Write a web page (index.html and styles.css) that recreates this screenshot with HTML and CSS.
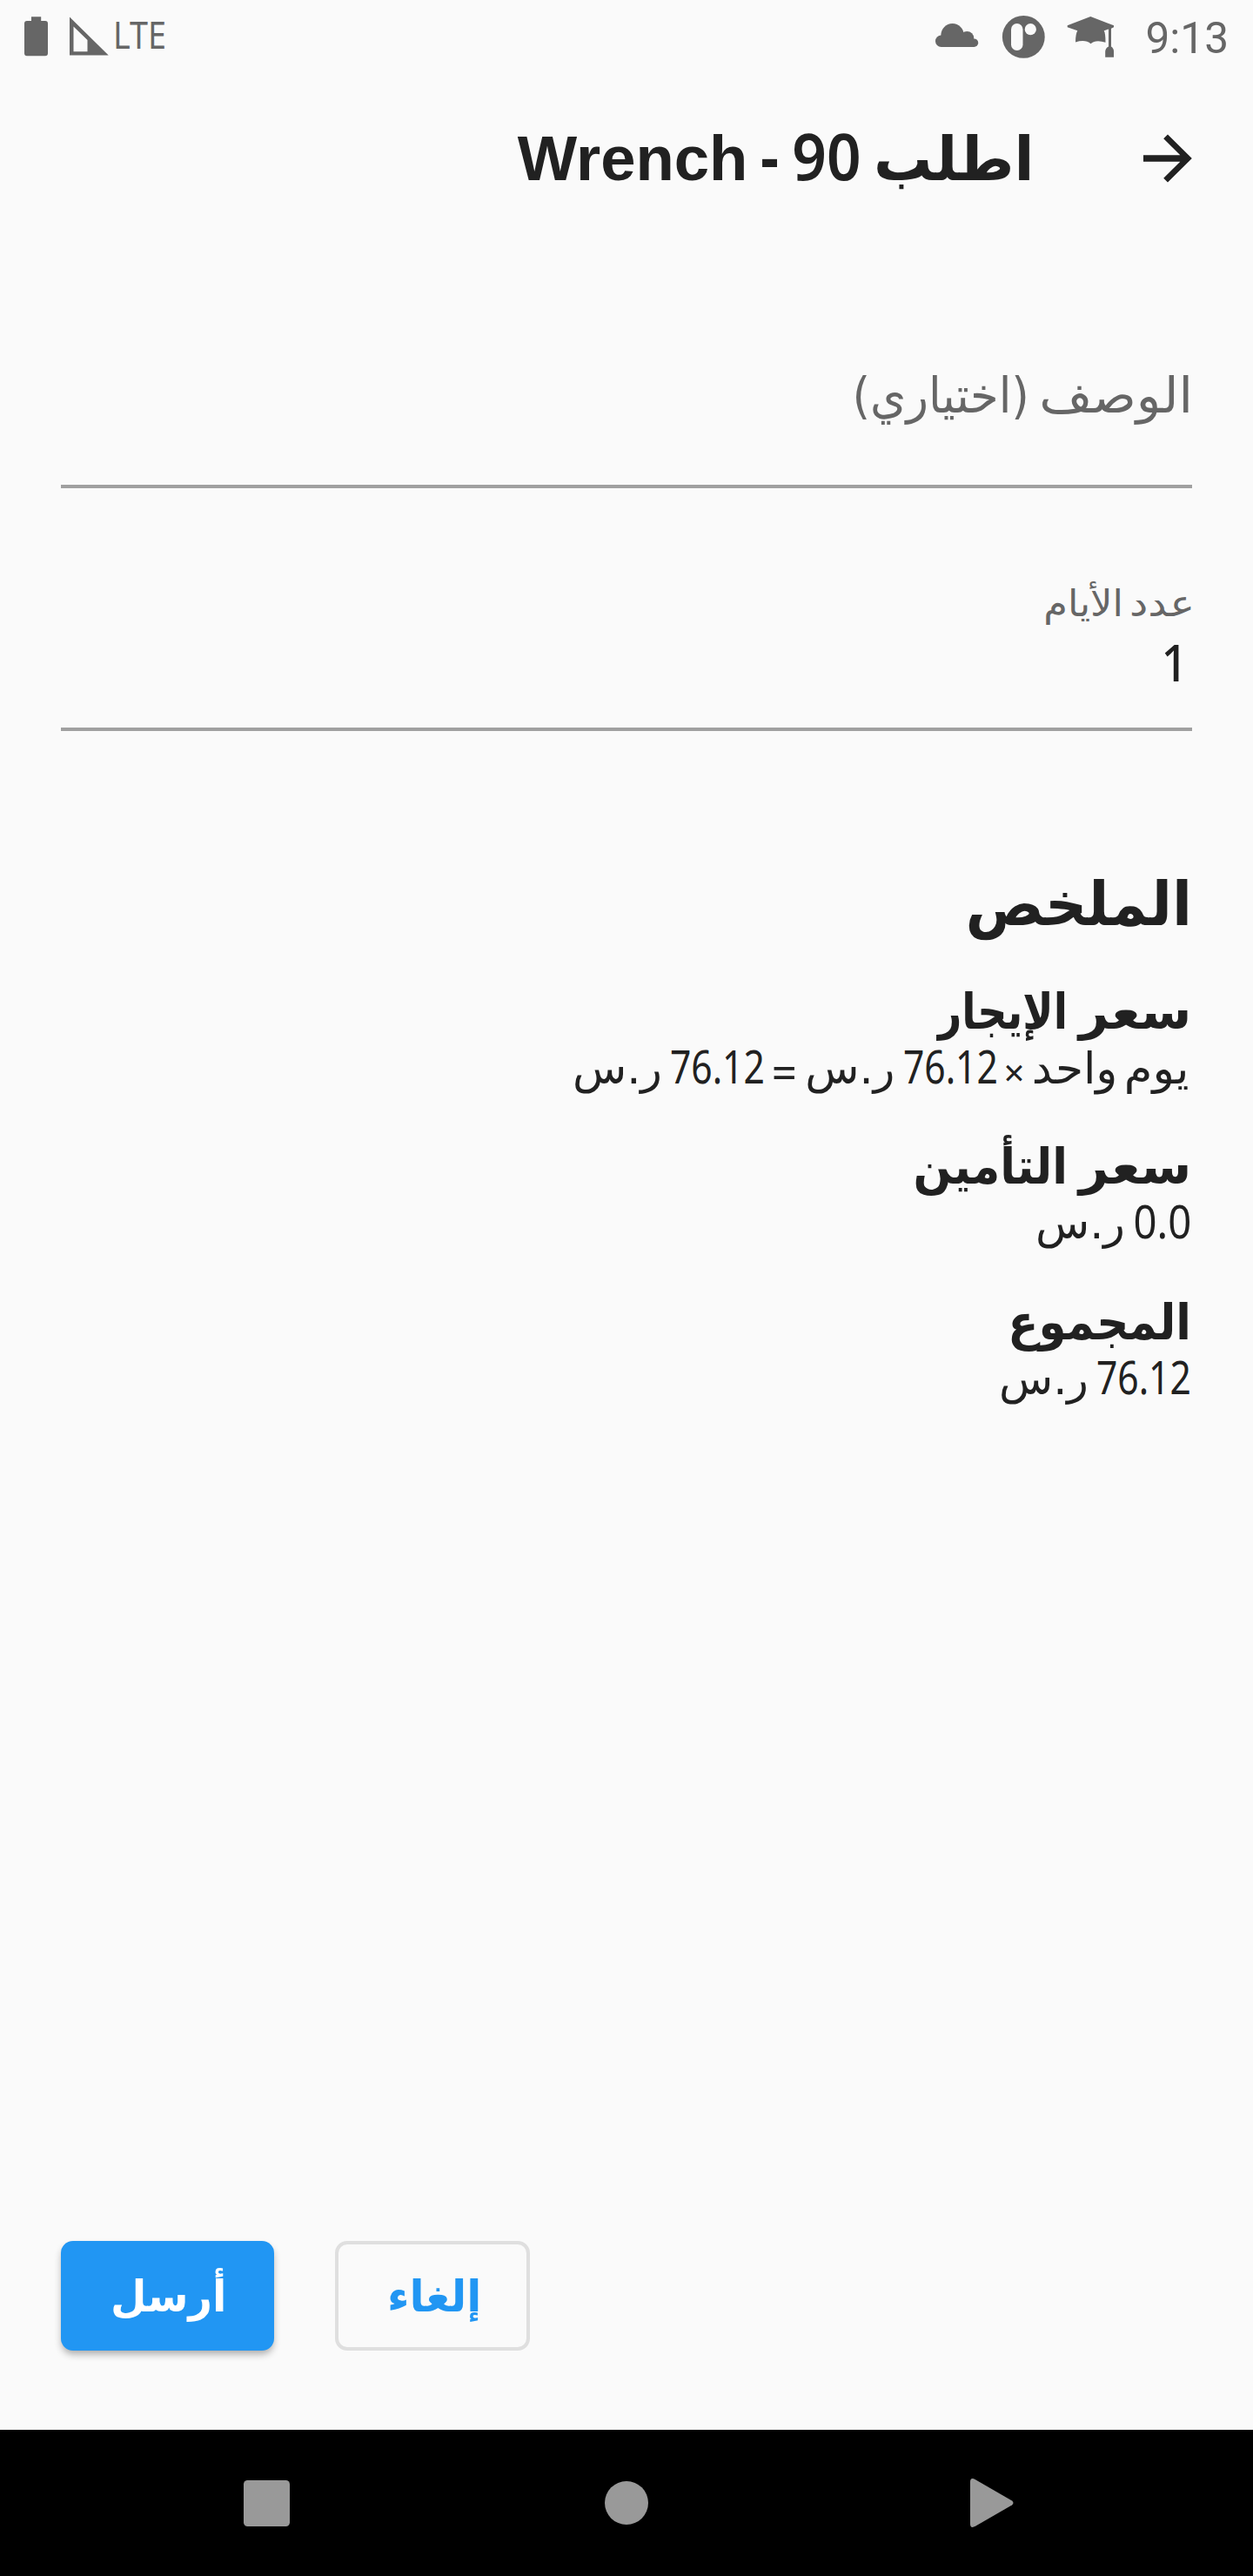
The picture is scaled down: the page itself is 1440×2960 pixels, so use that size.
FILE: index.html
```html
<!DOCTYPE html>
<html lang="ar" dir="rtl">
<head>
<meta charset="utf-8">
<title>اطلب 90 - Wrench</title>
<link rel="stylesheet" href="styles.css">
</head>
<body>
<div class="screen">
  <div class="status" dir="ltr">
    <svg class="status-left" width="100" height="84" viewBox="28 0 100 84">
      <path d="M36 19.3h11.2V24H52a3 3 0 0 1 3 3v34.3a3 3 0 0 1-3 3H31a3 3 0 0 1-3-3V27a3 3 0 0 1 3-3h5z"/>
      <path fill-rule="evenodd" d="M80 19.5 124.7 63.5H80zM84.5 30.5V59.3h16V46z"/>
    </svg>
    <span class="lte">LTE</span>
    <svg class="status-right" width="210" height="84" viewBox="1072 0 210 84">
      <circle cx="1080.7" cy="47.3" r="6.7"/>
      <circle cx="1093.6" cy="40.3" r="13.2"/>
      <circle cx="1110.3" cy="44" r="8"/>
      <circle cx="1118.4" cy="49.2" r="4.8"/>
      <path d="M1080.7 42h29.600l8.100 4v8h-37.700z"/>
      <circle cx="1175.3" cy="42.4" r="24.4"/>
      <rect class="cut" x="1161" y="27" width="13.5" height="31" rx="6.7"/>
      <circle class="cut" cx="1183.3" cy="33.7" r="6.6"/>
      <path d="M1225.700 29.300 1252.300 19 1279 29.300V31.300L1276 32.800V53.500Q1279 55.500 1279 59V65.700H1269.200V59Q1269.200 55.500 1273 53.500V33.500L1267.700 35.300Q1269.500 38 1269.500 48.700 1258 45 1252.500 50.300 1246.500 45 1235 48.500 1235 39 1237.300 35.300L1225.700 31.200z"/>
    </svg>
    <span class="clock">9:13</span>
  </div>

  <header class="header">
    <svg class="arrow" width="56" height="56" viewBox="0 0 56 56"><path d="M0 24.300H42.300L23.200 5.200 28 .4 55.800 28 28 55.600 23.200 50.800 42.300 31.700H0z"/></svg>
    <h1 class="row title">
      <span class="w t-order">اطلب</span>
      <span class="w t-num">90</span>
      <span class="w t-dash">-</span>
      <span class="w t-name">Wrench</span>
    </h1>
  </header>

  <main class="main">
    <div class="field field-desc">
      <div class="row label-big"><span class="w l-desc">الوصف</span><span class="w l-opt">(اختياري)</span></div>
    </div>
    <div class="field field-days">
      <div class="row label-small"><span class="w l-count">عدد</span><span class="w l-days">الأيام</span></div>
      <div class="row value"><span class="w v-one">1</span></div>
    </div>

    <h2 class="row summary"><span class="w s-head">الملخص</span></h2>
    <div class="prices">
      <section>
        <h3 class="row"><span class="w h-price">سعر</span><span class="w h-rent">الإيجار</span></h3>
        <p class="row">
          <span class="w p-day">يوم</span>
          <span class="w p-one">واحد</span>
          <span class="w p-times">×</span>
          <span class="w p-amount p-first">76.12</span>
          <span class="w p-cur p-cur-first">ر.س</span>
          <span class="w p-equal">=</span>
          <span class="w p-amount">76.12</span>
          <span class="w p-cur">ر.س</span>
        </p>
      </section>
      <section>
        <h3 class="row"><span class="w h-price">سعر</span><span class="w h-insurance">التأمين</span></h3>
        <p class="row"><span class="w p-zero">0.0</span><span class="w p-cur">ر.س</span></p>
      </section>
      <section>
        <h3 class="row"><span class="w h-total">المجموع</span></h3>
        <p class="row"><span class="w p-amount">76.12</span><span class="w p-cur">ر.س</span></p>
      </section>
    </div>
  </main>

  <footer class="actions" dir="ltr">
    <button class="btn send" dir="rtl"><span class="w">أرسل</span></button>
    <button class="btn cancel" dir="rtl"><span class="w">إلغاء</span></button>
  </footer>

  <nav class="nav" dir="ltr">
    <svg width="53" height="53" viewBox="0 0 53 53"><rect width="53" height="53" rx="4.500"/></svg>
    <svg class="home" width="50" height="50" viewBox="0 0 50 50"><circle cx="25" cy="25" r="25"/></svg>
    <svg width="50" height="52" viewBox="0 0 50 52"><path d="M0 2Q0-4 6-.8L48 23.500Q51 26 48 28.500L6 52.800Q0 56 0 50z"/></svg>
  </nav>
</div>
</body>
</html>
```
FILE: styles.css
```css
* { box-sizing: border-box; margin: 0; padding: 0; }

body {
  background: #fafafa;
  color: #212121;
  font-family: "DejaVu Sans", sans-serif;
}

.screen {
  width: 1440px;
  height: 2960px;
  display: flex;
  flex-direction: column;
  overflow: hidden;
}

/* Text rows: each word is fitted horizontally from its right edge */
.row {
  display: flex;
  align-items: baseline;
  height: 60px;
  line-height: 60px;
  font-weight: 400;
}
.w {
  display: block;
  flex: none;
  white-space: nowrap;
  transform-origin: 100% 50%;
}

/* Status bar */
.status {
  height: 84px;
  flex: none;
  display: flex;
  padding: 0 28px;
  color: #666;
}
.status svg, .status span { flex: none; }
.status svg { fill: #666; overflow: visible; }
.status .cut { fill: #fafafa; }
.lte {
  width: 60px;
  margin-left: 1.600px;
  font: 43.400px/80px "Noto Sans", sans-serif;
  transform: scaleX(.87);
  transform-origin: 0 50%;
}
.status-right { margin-left: auto; margin-right: 34px; }
.clock { font: 49.500px/89px Roboto, sans-serif; }

/* Header */
.header {
  height: 196px;
  flex: none;
  display: flex;
  align-items: center;
  padding-right: 70px;
}
.arrow { fill: #212121; flex: none; }
.title {
  height: 80px;
  line-height: 80px;
  margin: 0 125.500px 6px 0;
  font-size: 70px;
  font-weight: 700;
}
.t-order { width: 198.500px; transform: scaleX(.958); }
.t-num { width: 94.700px; font: 600 74px/80px "Noto Sans", sans-serif; transform: scaleX(.937); }
.t-dash { width: 35.900px; font: 700 74px/80px "Noto Sans", sans-serif; transform: scaleX(.87); }
.t-name { width: 265px; font: 700 72.500px/80px "Liberation Sans", sans-serif; }

/* Form */
.main { flex: 1; padding: 0 70px; }
.field { border-bottom: 4px solid #a0a0a0; color: #666; }
.field-desc { height: 281px; padding-top: 134.400px; }
.field-days { height: 279px; padding-top: 102.500px; }
.label-big { height: 80px; line-height: 80px; font-size: 56.600px; }
.l-desc { width: 188px; margin-right: -1px; transform: scaleX(1.047); }
.l-opt { width: 210px; transform: scaleX(.934); }
.label-small { font-size: 42px; }
.l-count { width: 82px; margin-right: -3px; transform: scaleX(1.14); }
.l-days { width: 100px; transform: scaleX(1.064); }
.value { margin-top: 6.700px; color: #212121; }
.v-one { width: 40px; margin-right: 5px; font: 500 58.800px/60px "Noto Sans", sans-serif; transform: scaleX(.91); }

/* Summary */
.summary { height: 80px; line-height: 80px; margin-top: 158.500px; font-size: 70px; font-weight: 700; }
.s-head { width: 280px; transform: scaleX(.959); }
.prices { display: flex; flex-direction: column; gap: 55.500px; padding-top: 53px; }
.prices h3 { margin-bottom: 3px; font-size: 56.600px; font-weight: 700; }
.prices p { font-size: 50px; }
.h-price { width: 142.400px; margin-right: .6px; transform: scaleX(1.053); }
.h-rent { width: 170px; transform: scaleX(.84); }
.h-insurance { width: 190px; transform: scaleX(.914); }
.h-total { width: 220px; margin-right: .7px; transform: scaleX(.91); }
.p-day { width: 82.500px; margin-right: 3.500px; transform: scaleX(1.056); }
.p-one { width: 106.400px; transform: scaleX(1.037); }
.p-times { width: 31.100px; font: 42px/60px "Noto Sans", sans-serif; transform: translateY(3px); }
.p-amount { width: 117.900px; margin-right: .8px; font: 52.500px/60px "Noto Sans", sans-serif; transform: scaleX(.812); }
.p-first { margin-right: 0; }
.p-cur { width: 105px; transform: scaleX(1.02); }
.p-cur-first { width: 112.400px; }
.p-equal { width: 37px; font: 52.500px/60px "Noto Sans", sans-serif; transform: translateY(7px) scaleX(.97); }
.p-zero { width: 76.300px; margin-right: 1px; font: 52.500px/60px "Noto Sans", sans-serif; transform: scaleX(.9); }

/* Actions */
.actions {
  flex: none;
  height: 217px;
  display: flex;
  gap: 70px;
  padding-left: 70px;
}
.btn {
  height: 126px;
  border: 0;
  border-radius: 14px;
  font: 700 50px/126px "DejaVu Sans", sans-serif;
}
.btn .w { line-height: 129px; height: 126px; text-align: right; }
.send {
  width: 245px;
  padding-right: 54.600px;
  background: #2196f3;
  color: #fff;
  box-shadow: 0 5px 8px -1px rgba(0, 0, 0, .32);
}
.send .w { transform: scaleX(.955); }
.cancel {
  width: 224px;
  padding-right: 51.500px;
  border: 4px solid #dfdfdf;
  background: transparent;
  color: #2196f3;
}
.cancel .w { line-height: 121px; height: 118px; }

/* System navigation */
.nav {
  flex: none;
  height: 168px;
  display: flex;
  align-items: center;
  padding-left: 280px;
  background: #000;
}
.nav svg { flex: none; fill: #999; overflow: visible; }
.nav .home { margin: 0 370px 0 362px; }
```
